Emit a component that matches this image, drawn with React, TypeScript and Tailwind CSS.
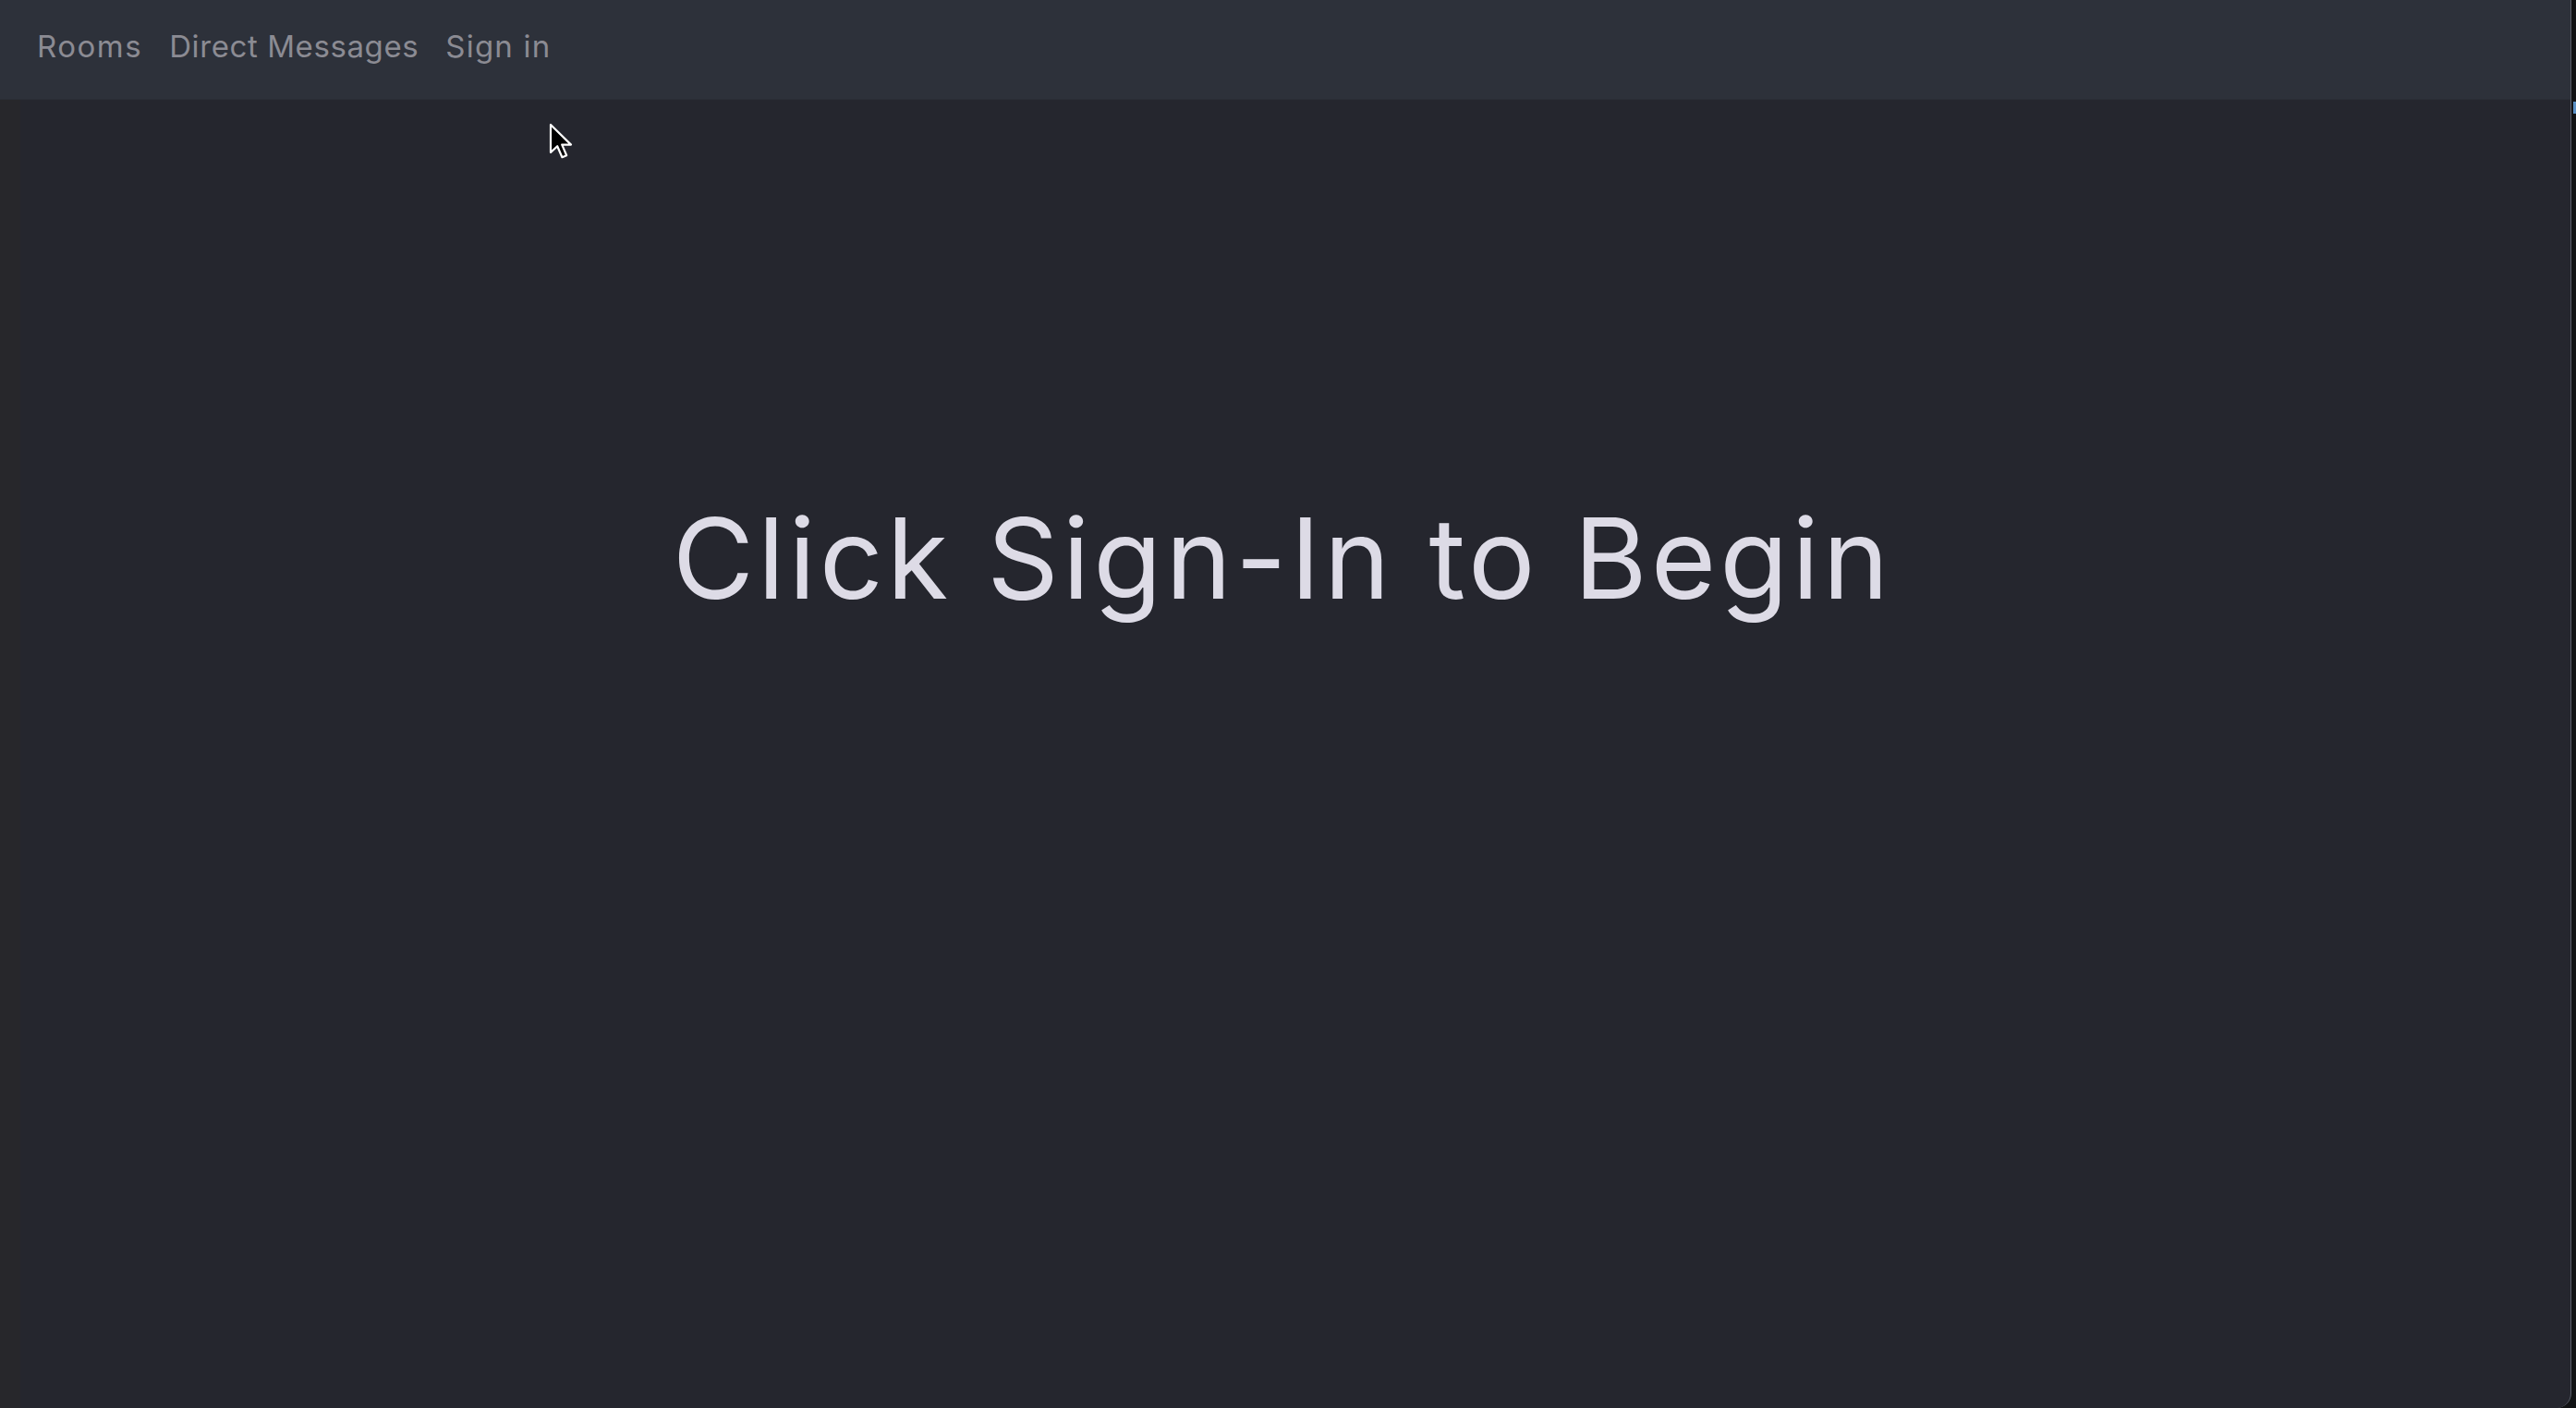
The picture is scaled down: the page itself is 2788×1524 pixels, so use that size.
import React from "react";

function Cursor() {
  return (
    <svg
      className="absolute left-[594px] top-[133px]"
      width="28"
      height="42"
      viewBox="0 0 14 21"
    >
      <path
        d="M1 1 L1 16 L4.6 12.6 L7.2 18.6 L9.6 17.6 L7.1 11.8 L12 11.8 Z"
        fill="#000"
        stroke="#fff"
        strokeWidth="1.1"
        strokeLinejoin="round"
      />
    </svg>
  );
}

export default function App() {
  return (
    <div
      className="relative flex h-[1524px] w-full flex-col overflow-hidden bg-[#111214]"
      style={{ fontFamily: "Inter, 'Noto Sans', sans-serif" }}
    >
      <div className="flex h-full w-[2783px] flex-col overflow-hidden rounded-br-[16px] border-r border-[#5c606b] bg-[#25262e]">
        <nav className="flex h-[108px] shrink-0 items-center gap-[29px] border-b border-[#2a2d35] bg-[#2d313a] pl-[40px] pb-[6px] text-[33px] tracking-[0.6px] text-[#8b8b93]">
          <span className="tracking-[1.5px]">Rooms</span>
          <span>Direct Messages</span>
          <span className="tracking-[1.2px]">Sign in</span>
        </nav>
        <main className="flex flex-1">
          <div className="w-[22px] shrink-0 bg-[#27272b]" />
          <div className="flex flex-1 justify-center pt-[436px] pr-[28px]">
            <h1 className="text-[121px] leading-none font-normal tracking-[4px] text-[#dddbe6]">
              Click Sign-In to Begin
            </h1>
          </div>
        </main>
      </div>
      <div className="absolute right-0 top-[110px] h-[13px] w-[3px] bg-[#5a8fc4]" />
      <Cursor />
    </div>
  );
}
